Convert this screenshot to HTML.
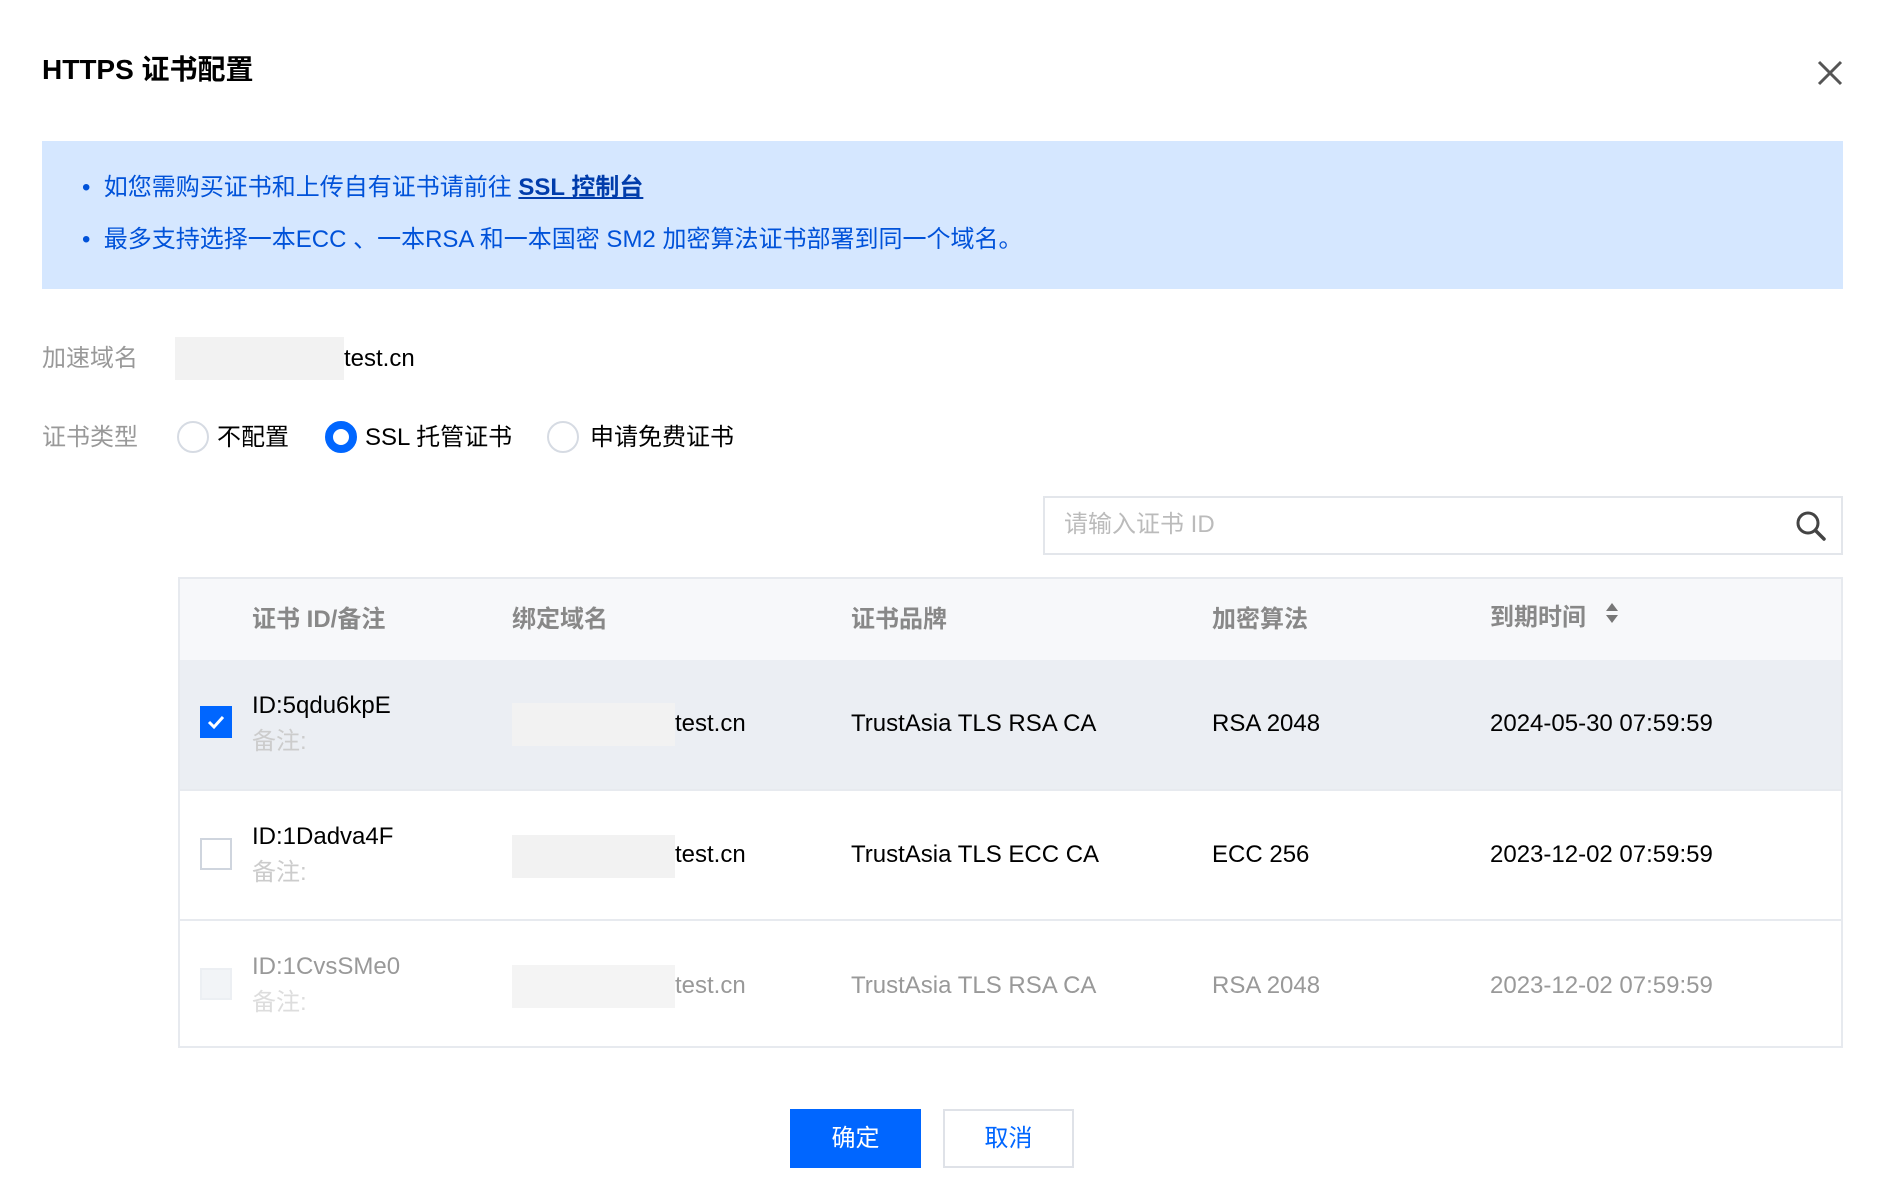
<!DOCTYPE html>
<html><head><meta charset="utf-8"><style>
*{margin:0;padding:0;box-sizing:border-box}
body{width:1880px;height:1200px;background:#fff;position:relative;overflow:hidden;font-family:"Liberation Sans","Noto Sans CJK SC",sans-serif;color:#000}
.a{position:absolute;white-space:nowrap}
.t{font-size:24px;line-height:30px}
.hd{color:#888;font-size:24px;font-weight:bold}
.gbox{position:absolute;background:#f2f2f2}
.radio{position:absolute;width:32px;height:32px;border-radius:50%;border:2px solid #d6dbe3;background:#fff}
.cb{position:absolute;width:32px;height:32px;border:2px solid #cfd5de;background:#fff}
.row{position:absolute;left:179px;width:1664px;border-top:2px solid #e7eaef}
</style></head><body>
<div class="a" style="left:42px;top:52px;font-size:28px;font-weight:bold;line-height:36px">HTTPS 证书配置</div>
<svg class="a" style="left:1817px;top:60px" width="26" height="26" viewBox="0 0 26 26"><path d="M2 2L24 24M24 2L2 24" stroke="#555" stroke-width="3"/></svg>

<div class="a" style="left:42px;top:141px;width:1801px;height:148px;background:#d5e7ff"></div>
<div class="a t" style="left:82px;top:173px;color:#0052d9">•&nbsp; 如您需购买证书和上传自有证书请前往 <b style="text-decoration:underline;color:#003cab">SSL 控制台</b></div>
<div class="a t" style="left:82px;top:225px;color:#0052d9">•&nbsp; 最多支持选择一本ECC 、一本RSA 和一本国密 SM2 加密算法证书部署到同一个域名。</div>

<div class="a t" style="left:42px;top:344px;color:#999">加速域名</div>
<div class="gbox" style="left:175px;top:337px;width:169px;height:43px"></div>
<div class="a t" style="left:344px;top:344px">test.cn</div>

<div class="a t" style="left:42px;top:423px;color:#999">证书类型</div>
<div class="radio" style="left:177px;top:421px"></div>
<div class="a t" style="left:217px;top:423px">不配置</div>
<div class="radio" style="left:325px;top:421px;border:8px solid #0066ff"></div>
<div class="a t" style="left:365px;top:423px">SSL 托管证书</div>
<div class="radio" style="left:547px;top:421px"></div>
<div class="a t" style="left:590px;top:423px">申请免费证书</div>

<div class="a" style="left:1043px;top:496px;width:800px;height:59px;border:2px solid #e3e6eb"></div>
<div class="a t" style="left:1064px;top:510px;color:#bbb">请输入证书 ID</div>
<svg class="a" style="left:1795px;top:510px" width="32" height="32" viewBox="0 0 32 32"><circle cx="13" cy="13" r="10" fill="none" stroke="#444" stroke-width="3"/><path d="M21 21L29 29" stroke="#444" stroke-width="3.5" stroke-linecap="round"/></svg>

<div class="a" style="left:178px;top:577px;width:1665px;height:471px;border:2px solid #e7eaef"></div>
<div class="a" style="left:180px;top:579px;width:1661px;height:81px;background:#f7f8fa"></div>
<div class="a hd" style="left:252px;top:599px">证书 ID/备注</div>
<div class="a hd" style="left:512px;top:599px">绑定域名</div>
<div class="a hd" style="left:851px;top:599px">证书品牌</div>
<div class="a hd" style="left:1212px;top:599px">加密算法</div>
<div class="a hd" style="left:1490px;top:597px">到期时间</div>
<svg class="a" style="left:1604px;top:602px" width="16" height="22" viewBox="0 0 16 22"><path d="M8 1L14 9H2Z M8 21L14 13H2Z" fill="#777"/></svg>

<div class="a" style="left:180px;top:660px;width:1661px;height:129px;background:#ebeef3"></div>
<div class="row" style="top:789px"></div>
<div class="row" style="top:919px"></div>

<div class="cb" style="left:200px;top:706px;background:#0066ff;border-color:#0066ff"></div>
<svg class="a" style="left:204px;top:710px" width="24" height="24" viewBox="0 0 24 24"><path d="M5 12L10 17L19 7" fill="none" stroke="#fff" stroke-width="3"/></svg>
<div class="a t" style="left:252px;top:691px">ID:5qdu6kpE</div>
<div class="a t" style="left:252px;top:727px;color:#ccc">备注:</div>
<div class="gbox" style="left:512px;top:703px;width:163px;height:43px"></div>
<div class="a t" style="left:675px;top:709px">test.cn</div>
<div class="a t" style="left:851px;top:709px">TrustAsia TLS RSA CA</div>
<div class="a t" style="left:1212px;top:709px">RSA 2048</div>
<div class="a t" style="left:1490px;top:709px">2024-05-30 07:59:59</div>

<div class="cb" style="left:200px;top:838px"></div>
<div class="a t" style="left:252px;top:822px">ID:1Dadva4F</div>
<div class="a t" style="left:252px;top:858px;color:#ccc">备注:</div>
<div class="gbox" style="left:512px;top:835px;width:163px;height:43px"></div>
<div class="a t" style="left:675px;top:840px">test.cn</div>
<div class="a t" style="left:851px;top:840px">TrustAsia TLS ECC CA</div>
<div class="a t" style="left:1212px;top:840px">ECC 256</div>
<div class="a t" style="left:1490px;top:840px">2023-12-02 07:59:59</div>

<div class="cb" style="left:200px;top:968px;background:#f2f4f7;border-color:#eceff3"></div>
<div class="a t" style="left:252px;top:952px;color:#999">ID:1CvsSMe0</div>
<div class="a t" style="left:252px;top:988px;color:#ddd">备注:</div>
<div class="gbox" style="left:512px;top:965px;width:163px;height:43px;background:#f4f4f4"></div>
<div class="a t" style="left:675px;top:971px;color:#999">test.cn</div>
<div class="a t" style="left:851px;top:971px;color:#999">TrustAsia TLS RSA CA</div>
<div class="a t" style="left:1212px;top:971px;color:#999">RSA 2048</div>
<div class="a t" style="left:1490px;top:971px;color:#999">2023-12-02 07:59:59</div>

<div class="a" style="left:790px;top:1109px;width:131px;height:59px;background:#0066ff;color:#fff;font-size:24px;line-height:59px;text-align:center">确定</div>
<div class="a" style="left:943px;top:1109px;width:131px;height:59px;border:2px solid #dfe2e8;color:#0066ff;font-size:24px;line-height:55px;text-align:center">取消</div>
</body></html>
